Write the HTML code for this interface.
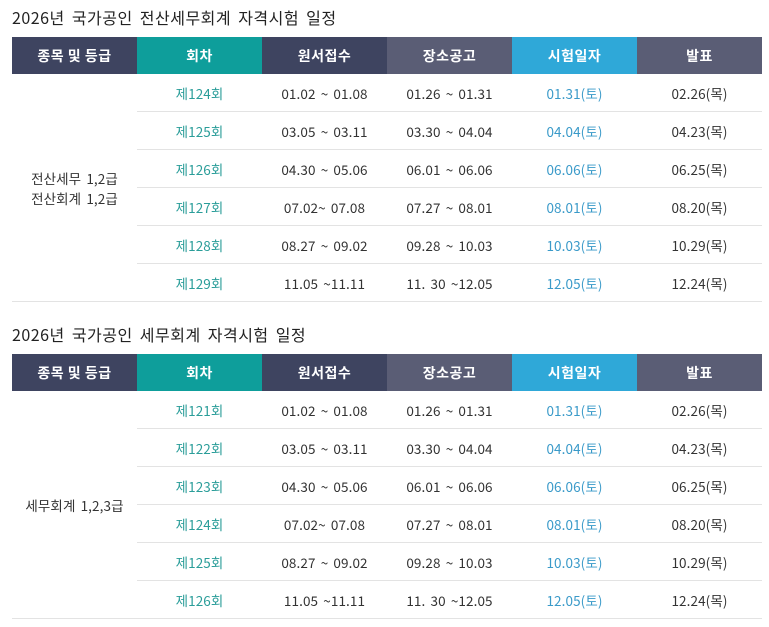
<!DOCTYPE html>
<html><head><meta charset="utf-8"><style>
body{margin:0;background:#fff;font-family:"Noto Sans CJK KR",sans-serif;color:#222;}
.t{position:absolute;left:12px;font-size:16px;color:#222;line-height:22px;letter-spacing:0.5px;word-spacing:3px;}
table{position:absolute;left:12px;width:750px;border-collapse:collapse;table-layout:fixed;}
th{height:37px;color:#fff;font-size:14px;font-weight:bold;padding:0;line-height:18px;letter-spacing:0.5px;}
td{height:37px;border-bottom:1px solid #e3e3e3;text-align:center;font-size:13.5px;padding:0;color:#333;line-height:18px;letter-spacing:0.1px;word-spacing:2px;}
.a{background:#3e4460}.b{background:#0e9e9b}.c{background:#5a5d75}.d{background:#2fa8d8}
.g{color:#2a9d99}.bl{color:#3a9ac9}
</style></head><body>
<div class="t" style="top:6px">2026년 국가공인 전산세무회계 자격시험 일정</div>
<table style="top:37px">
<tr><th class="a">종목 및 등급</th><th class="b">회차</th><th class="a">원서접수</th><th class="c">장소공고</th><th class="d">시험일자</th><th class="c">발표</th></tr>
<tr><td rowspan="6" style="line-height:20px">전산세무 1,2급<br>전산회계 1,2급</td><td class="g">제124회</td><td>01.02 ~ 01.08</td><td>01.26 ~ 01.31</td><td class="bl">01.31(토)</td><td>02.26(목)</td></tr>
<tr><td class="g">제125회</td><td>03.05 ~ 03.11</td><td>03.30 ~ 04.04</td><td class="bl">04.04(토)</td><td>04.23(목)</td></tr>
<tr><td class="g">제126회</td><td>04.30 ~ 05.06</td><td>06.01 ~ 06.06</td><td class="bl">06.06(토)</td><td>06.25(목)</td></tr>
<tr><td class="g">제127회</td><td>07.02~ 07.08</td><td>07.27 ~ 08.01</td><td class="bl">08.01(토)</td><td>08.20(목)</td></tr>
<tr><td class="g">제128회</td><td>08.27 ~ 09.02</td><td>09.28 ~ 10.03</td><td class="bl">10.03(토)</td><td>10.29(목)</td></tr>
<tr><td class="g">제129회</td><td>11.05 ~11.11</td><td>11. 30 ~12.05</td><td class="bl">12.05(토)</td><td>12.24(목)</td></tr>
</table>
<div class="t" style="top:323px">2026년 국가공인 세무회계 자격시험 일정</div>
<table style="top:354px">
<tr><th class="a">종목 및 등급</th><th class="b">회차</th><th class="a">원서접수</th><th class="c">장소공고</th><th class="d">시험일자</th><th class="c">발표</th></tr>
<tr><td rowspan="6">세무회계 1,2,3급</td><td class="g">제121회</td><td>01.02 ~ 01.08</td><td>01.26 ~ 01.31</td><td class="bl">01.31(토)</td><td>02.26(목)</td></tr>
<tr><td class="g">제122회</td><td>03.05 ~ 03.11</td><td>03.30 ~ 04.04</td><td class="bl">04.04(토)</td><td>04.23(목)</td></tr>
<tr><td class="g">제123회</td><td>04.30 ~ 05.06</td><td>06.01 ~ 06.06</td><td class="bl">06.06(토)</td><td>06.25(목)</td></tr>
<tr><td class="g">제124회</td><td>07.02~ 07.08</td><td>07.27 ~ 08.01</td><td class="bl">08.01(토)</td><td>08.20(목)</td></tr>
<tr><td class="g">제125회</td><td>08.27 ~ 09.02</td><td>09.28 ~ 10.03</td><td class="bl">10.03(토)</td><td>10.29(목)</td></tr>
<tr><td class="g">제126회</td><td>11.05 ~11.11</td><td>11. 30 ~12.05</td><td class="bl">12.05(토)</td><td>12.24(목)</td></tr>
</table>
</body></html>
